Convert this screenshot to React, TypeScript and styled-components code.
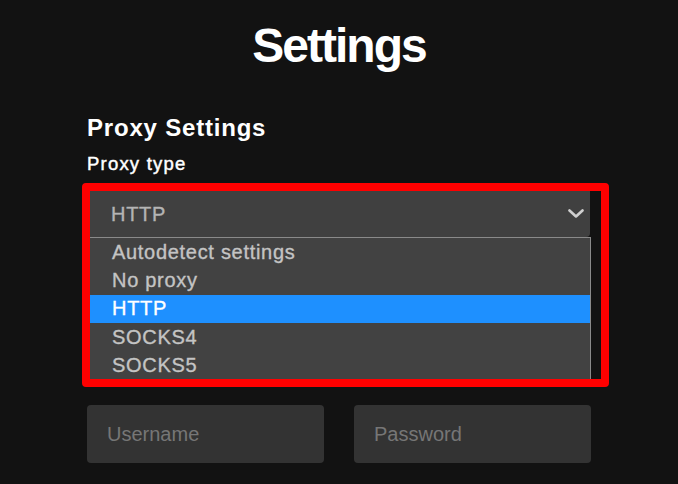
import React from "react";
import styled, { createGlobalStyle } from "styled-components";

const Global = createGlobalStyle`
  html, body {
    margin: 0;
    padding: 0;
    background: #121212;
  }
  body {
    font-family: "Liberation Sans", Arial, sans-serif;
    color: #fff;
  }
`;

const Page = styled.div`
  width: 678px;
  height: 484px;
  overflow: hidden;
  background: #121212;
  padding-top: 22px;
  box-sizing: border-box;
`;

const Title = styled.h1`
  margin: 0;
  font-size: 48px;
  line-height: 48px;
  font-weight: 700;
  letter-spacing: -2px;
  text-align: center;
  color: #fff;
`;

const Section = styled.section`
  width: 504px;
  margin: 46px 0 0 87px;
  display: flex;
  flex-direction: column;
`;

const Heading = styled.h2`
  margin: 0;
  font-size: 24px;
  line-height: 24px;
  font-weight: 700;
  letter-spacing: 0.8px;
  color: #fff;
`;

const Label = styled.div`
  margin-top: 15px;
  font-size: 18.5px;
  line-height: 18px;
  font-weight: 400;
  letter-spacing: 1.2px;
  -webkit-text-stroke: 0.45px #fff;
  color: #fff;
`;

const Highlight = styled.div`
  margin: 10px 0 0 -5px;
  width: 527px;
  box-sizing: border-box;
  border: 8px solid #ff0000;
  border-radius: 4px;
  background: #121212;
`;

const SelectBox = styled.div`
  width: 500px;
  height: 46px;
  box-sizing: border-box;
  background: #404040;
  border-radius: 0 0 4px 0;
  display: flex;
  align-items: center;
  justify-content: space-between;
  padding: 0 6px 0 21px;
  font-size: 20px;
  letter-spacing: 0.7px;
  -webkit-text-stroke: 0.35px #b4b4b4;
  color: #b4b4b4;
`;

const List = styled.ul`
  list-style: none;
  margin: 0;
  padding: 0;
  width: 501px;
  height: 142px;
  box-sizing: border-box;
  overflow: hidden;
  background: #424242;
  border-top: 1px solid #8a8a8a;
  border-right: 1px solid #8a8a8a;
`;

const Option = styled.li<{ $active?: boolean }>`
  height: 28.4px;
  display: flex;
  align-items: center;
  padding-left: 22px;
  font-size: 20px;
  letter-spacing: 0.7px;
  color: ${(p) => (p.$active ? "#ffffff" : "#c4c4c4")};
  -webkit-text-stroke: 0.35px ${(p) => (p.$active ? "#ffffff" : "#c4c4c4")};
  background: ${(p) => (p.$active ? "#1e90ff" : "transparent")};
`;

const Fields = styled.div`
  margin-top: 18px;
  display: grid;
  grid-template-columns: 237px 237px;
  column-gap: 30px;
`;

const Input = styled.input`
  height: 58px;
  box-sizing: border-box;
  border: none;
  outline: none;
  border-radius: 4px;
  background: #333333;
  padding: 0 20px;
  font-family: "Liberation Sans", Arial, sans-serif;
  font-size: 20px;
  color: #fff;
  &::placeholder {
    color: #767676;
  }
`;

const Chevron = () => (
  <svg width="16" height="10" viewBox="0 0 16 10">
    <polyline
      points="1.5,1.5 8,7.5 14.5,1.5"
      fill="none"
      stroke="#cfcfcf"
      strokeWidth="2.6"
      strokeLinecap="round"
      strokeLinejoin="round"
    />
  </svg>
);

const options = ["Autodetect settings", "No proxy", "HTTP", "SOCKS4", "SOCKS5"];

export default function App() {
  return (
    <Page>
      <Global />
      <Title>Settings</Title>
      <Section>
        <Heading>Proxy Settings</Heading>
        <Label>Proxy type</Label>
        <Highlight>
          <SelectBox>
            <span>HTTP</span>
            <Chevron />
          </SelectBox>
          <List>
            {options.map((o) => (
              <Option key={o} $active={o === "HTTP"}>
                {o}
              </Option>
            ))}
          </List>
        </Highlight>
        <Fields>
          <Input placeholder="Username" />
          <Input placeholder="Password" type="password" />
        </Fields>
      </Section>
    </Page>
  );
}
